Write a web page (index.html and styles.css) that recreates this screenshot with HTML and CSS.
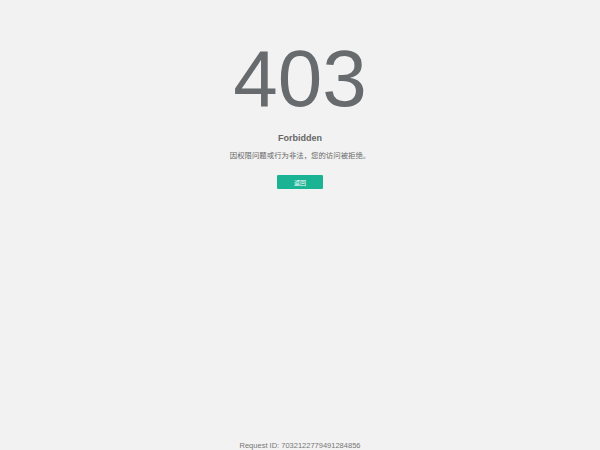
FILE: index.html
```html
<!DOCTYPE html>
<html lang="zh-CN">
<head>
<meta charset="utf-8">
<title>403 Forbidden</title>
<link rel="stylesheet" href="styles.css">
</head>
<body>
<div class="page">
  <main class="main">
    <div class="code">403</div>
    <div class="title">Forbidden</div>
    <div class="desc">因权限问题或行为非法，您的访问被拒绝。</div>
    <a class="btn" href="#">返回</a>
  </main>
  <footer class="footer">Request ID: 7032122779491284856</footer>
</div>
</body>
</html>
```
FILE: styles.css
```css
html, body {
  margin: 0;
  padding: 0;
  background: #f2f2f2;
}
body {
  font-family: "Liberation Sans", Arial, "Noto Sans CJK SC", sans-serif;
  color: #666;
}
.page {
  min-height: 100vh;
  display: flex;
  flex-direction: column;
  align-items: center;
}
.main {
  display: flex;
  flex-direction: column;
  align-items: center;
  flex: 1;
}
.code {
  margin-top: 39px;
  font-size: 80px;
  line-height: 80px;
  color: #676b6e;
}
.title {
  margin-top: 13px;
  font-size: 9px;
  line-height: 12px;
  font-weight: bold;
  color: #666;
}
.desc {
  margin-top: 5px;
  font-size: 7.4px;
  line-height: 12px;
  color: #666;
  font-family: "Noto Sans CJK SC", "Liberation Sans", sans-serif;
}
.btn {
  margin-top: 14px;
  width: 46px;
  height: 14px;
  display: flex;
  align-items: center;
  justify-content: center;
  background: #1ab394;
  border-radius: 1px;
  color: #fff;
  font-size: 6px;
  text-decoration: none;
  font-family: "Noto Sans CJK SC", sans-serif;
}
.footer {
  font-size: 7.5px;
  line-height: 9px;
  color: #777;
}
```
